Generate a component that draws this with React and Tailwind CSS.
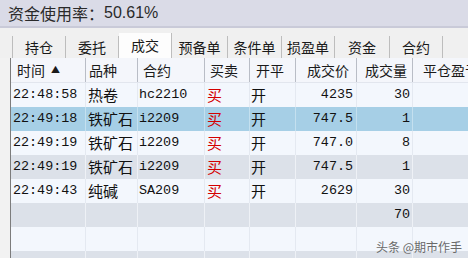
import React from "react";

const cjk = { fontFamily: '"Noto Sans CJK SC", "Noto Sans", sans-serif' };
const mono = { fontFamily: '"Liberation Mono", "Noto Sans CJK SC", monospace' };

const tabs = [
  { label: "持仓", w: "w-[54px]" },
  { label: "委托", w: "w-[53px]" },
  { label: "成交", w: "w-[53px]", active: true },
  { label: "预备单", w: "w-[56px]" },
  { label: "条件单", w: "w-[54px]" },
  { label: "损盈单", w: "w-[53px]" },
  { label: "资金", w: "w-[55px]" },
  { label: "合约", w: "w-[53px]" },
];

const rows = [
  { time: "22:48:58", name: "热卷", code: "hc2210", price: "4235", qty: "30" },
  { time: "22:49:18", name: "铁矿石", code: "i2209", price: "747.5", qty: "1", selected: true },
  { time: "22:49:19", name: "铁矿石", code: "i2209", price: "747.0", qty: "8" },
  { time: "22:49:19", name: "铁矿石", code: "i2209", price: "747.5", qty: "1" },
  { time: "22:49:43", name: "纯碱", code: "SA209", price: "2629", qty: "30" },
  { total: true, qty: "70" },
  { empty: true },
  { empty: true },
];

const gridCols = "grid grid-cols-[75px_52px_67px_45px_46px_61px_56px_minmax(0,1fr)]";

function Row({ r, i }) {
  const bg = r.selected ? "bg-[#a6cfe6]" : i % 2 === 1 ? "bg-[#dce1e9]" : "bg-[#f3f7fd]";
  const line = r.selected
    ? "border-r border-[#c4e0ef]"
    : i % 2 === 1
    ? "border-r border-[#eef1f6]"
    : "border-r border-[#e4e9f1]";
  const cell = `${line} h-[24px] flex items-center text-[#111]`;
  return (
    <div className={`${gridCols} ${bg}`}>
      <div className={`${cell} pl-[2px] text-[13.4px]`} style={mono}>{r.time}</div>
      <div className={`${cell} pl-[2px] text-[15px]`} style={cjk}>{r.name}</div>
      <div className={`${cell} pl-[1px] text-[13.4px]`} style={mono}>{r.code}</div>
      <div className={`${cell} pl-[2px] text-[15px] text-[#d40000]`} style={cjk}>
        {r.time ? "买" : ""}
      </div>
      <div className={`${cell} pl-[1px] text-[15px]`} style={cjk}>{r.time ? "开" : ""}</div>
      <div className={`${cell} justify-end pr-[3px] text-[13.4px]`} style={mono}>{r.price}</div>
      <div className={`${cell} justify-end pr-[2px] text-[13.4px]`} style={mono}>{r.qty}</div>
      <div className="h-[24px]" />
    </div>
  );
}

export default function App() {
  return (
    <div className="relative w-[468px] h-[258px] overflow-hidden bg-[#f0f0f0]" style={cjk}>
      {/* 顶部资金栏 */}
      <div className="h-[28px] bg-[#dadbe7] border-b-2 border-[#c9cad8] pl-[8px] flex items-center text-[16px] text-[#2a2a2a]">
        资金使用率：<span style={{ fontFamily: '"Liberation Sans", sans-serif' }}>50.61%</span>
      </div>

      {/* 标签页 */}
      <div className="h-[30px] flex items-end pl-[12px]">
        {tabs.map((t, i) => (
          <div
            key={t.label}
            className={`${t.w} shrink-0 flex items-center justify-center text-[14px] text-[#1a1a1a] border-r border-[#bdbdbd] ${
              i === 0 ? "border-l" : ""
            } ${t.active ? "h-[25px] bg-[#fdfdfd]" : "h-[22px]"}`}
          >
            {t.label}
          </div>
        ))}
      </div>

      {/* 成交表格 */}
      <div className="flex">
        <div className="w-[11px] shrink-0 border-r border-[#7c7c7c] bg-[#f2f2f2]" />
        <div className="flex-1 min-w-0 overflow-hidden">
          <div className={`${gridCols} bg-[#f4f6fb] border-b border-[#e2e6ee] text-[14px] text-[#1a1a1a]`}>
            <div className="h-[24px] flex items-center pl-[6px] border-r border-[#b9bdc6]">
              时间<span className="ml-[6px] text-[9px]">▲</span>
            </div>
            <div className="h-[24px] flex items-center pl-[3px] border-r border-[#b9bdc6]">品种</div>
            <div className="h-[24px] flex items-center pl-[5px] border-r border-[#b9bdc6]">合约</div>
            <div className="h-[24px] flex items-center pl-[5px] border-r border-[#b9bdc6]">买卖</div>
            <div className="h-[24px] flex items-center pl-[6px] border-r border-[#b9bdc6]">开平</div>
            <div className="h-[24px] flex items-center justify-end pr-[7px] border-r border-[#b9bdc6]">成交价</div>
            <div className="h-[24px] flex items-center justify-end pr-[5px] border-r border-[#b9bdc6]">成交量</div>
            <div className="h-[24px] flex items-center pl-[10px] whitespace-nowrap">平仓盈亏</div>
          </div>
          {rows.map((r, i) => (
            <Row key={i} r={r} i={i} />
          ))}
        </div>
      </div>

      {/* 水印 */}
      <div className="absolute right-[6px] bottom-[2px] text-[12px] text-[#6a6a6a] whitespace-nowrap">
        头条 @期市作手
      </div>
    </div>
  );
}
